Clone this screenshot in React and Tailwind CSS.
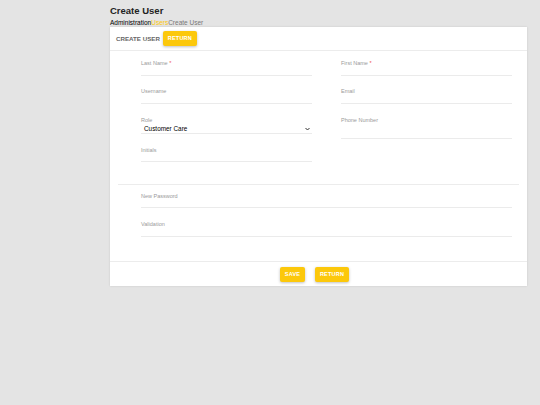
import React from "react";

const Field = ({ label, required, className = "", inputClass = "h-[9px]" }) => (
  <div className={className}>
    <div className="text-[5.5px] leading-[7px] text-[#9a9a9a]">
      {label}
      {required && <span className="text-[#ef5350]"> *</span>}
    </div>
    <div className={`border-b border-[#ebebeb] ${inputClass}`} />
  </div>
);

const YellowButton = ({ children, className = "" }) => (
  <button
    className={`h-[15px] rounded-[2px] bg-[#fcc80b] text-[5.5px] font-bold tracking-[0.2px] text-white shadow-[0_1px_3px_rgba(0,0,0,0.25)] ${className}`}
  >
    {children}
  </button>
);

export default function App() {
  return (
    <div
      className="min-h-[405px] w-[540px] bg-[#e4e4e4] pl-[110px] pr-[13px] pt-[5px]"
      style={{ fontFamily: '"Liberation Sans", Arial, sans-serif' }}
    >
      <h1 className="text-[9.5px] font-bold leading-[12px] text-[#222]">Create User</h1>
      <div className="mt-[2px] text-[6.5px] leading-[8px]">
        <span className="text-black">Administration</span>
        <span className="text-[#fcc80b]">Users</span>
        <span className="text-[#777]">Create User</span>
      </div>

      <div className="h-[259px] bg-white shadow-[0_0_2px_rgba(0,0,0,0.12)]">
        <div className="flex h-[24px] items-center border-b border-[#ececec] pl-[6px]">
          <span className="text-[6.2px] font-bold text-[#666]">CREATE USER</span>
          <YellowButton className="ml-[3px] w-[34px]">RETURN</YellowButton>
        </div>

        <div className="mx-[8px] h-[134px] border-b border-[#ececec] pl-[23px] pr-[7px] pt-[9px]">
          <div className="grid grid-cols-2 gap-x-[29px]">
            <div className="flex flex-col">
              <Field label="Last Name" required />
              <Field label="Username" className="mt-[12px]" />
              <div className="mt-[13px]">
                <div className="text-[5.5px] leading-[7px] text-[#9a9a9a]">Role</div>
                <div className="relative flex h-[10px] items-center border-b border-[#ebebeb]">
                  <span className="pl-[3px] text-[6.4px] text-black">Customer Care</span>
                  <svg
                    className="absolute right-[2px] top-[3px]"
                    width="5"
                    height="4"
                    viewBox="0 0 10 8"
                    fill="none"
                    stroke="#333"
                    strokeWidth="2"
                  >
                    <path d="M1 2 L5 6 L9 2" />
                  </svg>
                </div>
              </div>
              <Field label="Initials" className="mt-[13px]" inputClass="h-[8px]" />
            </div>
            <div className="flex flex-col">
              <Field label="First Name" required />
              <Field label="Email" className="mt-[12px]" />
              <Field label="Phone Number" className="mt-[13px]" inputClass="h-[15px]" />
            </div>
          </div>
        </div>

        <div className="h-[77px] border-b border-[#ececec] pl-[31px] pr-[15px] pt-[8px]">
          <Field label="New Password" inputClass="h-[8px]" />
          <Field label="Validation" className="mt-[13px]" />
        </div>

        <div className="flex h-[24px] items-center justify-center gap-[10px] pr-[8px]">
          <YellowButton className="w-[25px]">SAVE</YellowButton>
          <YellowButton className="w-[34px]">RETURN</YellowButton>
        </div>
      </div>
    </div>
  );
}
